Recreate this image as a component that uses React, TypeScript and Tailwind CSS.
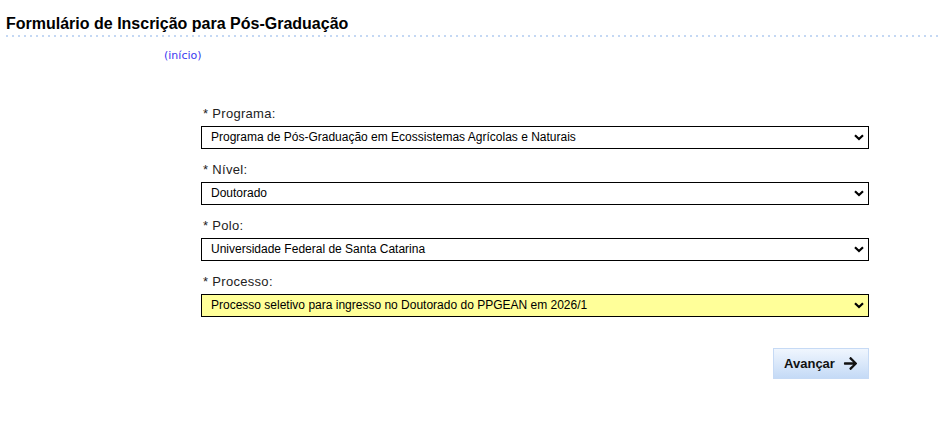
import { FaArrowRight } from "react-icons/fa";

const FIELDS = [
  { label: "Programa", value: "Programa de Pós-Graduação em Ecossistemas Agrícolas e Naturais", highlight: false },
  { label: "Nível", value: "Doutorado", highlight: false },
  { label: "Polo", value: "Universidade Federal de Santa Catarina", highlight: false },
  { label: "Processo", value: "Processo seletivo para ingresso no Doutorado do PPGEAN em 2026/1", highlight: true },
];

function Chevron() {
  return (
    <svg width="10" height="7" viewBox="0 0 10 7" className="pointer-events-none absolute right-[5px] top-[8px]">
      <path d="M1 1.2 L5 5 L9 1.2" fill="none" stroke="#000" strokeWidth="2.2" />
    </svg>
  );
}

export default function App() {
  return (
    <div className="min-h-[430px] w-[942px] bg-white font-['Liberation_Sans',Arial,sans-serif] text-black">
      <div className="pl-[6px] pt-[14px]">
        <h1 className="text-[16px] font-bold leading-[20px] text-black">Formulário de Inscrição para Pós-Graduação</h1>
        <div className="mt-[1px] h-[2px] w-full bg-[linear-gradient(to_right,#c4d8f4_2px,transparent_2px)] bg-[length:6px_2px] bg-repeat-x" />
      </div>

      <div className="pl-[164px] pt-[12px] font-['DejaVu_Sans',Verdana,sans-serif] text-[11px] leading-[14px] text-[#3a3af0]">
        <a href="#">(início)</a>
      </div>

      <form className="ml-[201px] mt-[43px] w-[668px]">
        {FIELDS.map((f) => (
          <div key={f.label} className="mb-[13px]">
            <label className="block pl-[2px] text-[13px] leading-[16px] tracking-[0.3px] text-[#222]">
              * {f.label}:
            </label>
            <div className="relative mt-[4px]">
              <select
                defaultValue={f.value}
                className={`block h-[23px] w-full appearance-none border border-black pl-[9px] text-[12px] leading-[21px] text-black outline-none ${
                  f.highlight ? "bg-[#ffff99]" : "bg-white"
                }`}
              >
                <option>{f.value}</option>
              </select>
              <Chevron />
            </div>
          </div>
        ))}

        <div className="flex justify-end pt-[18px]">
          <button
            type="button"
            className="flex h-[31px] w-[96px] items-center justify-center gap-[8px] border border-[#c6daf5] bg-[linear-gradient(to_bottom,#f0f6fe,#c4daf6)] text-[13px] font-bold text-[#111]"
          >
            Avançar
            <FaArrowRight className="h-[15px] w-[15px]" />
          </button>
        </div>
      </form>
    </div>
  );
}
